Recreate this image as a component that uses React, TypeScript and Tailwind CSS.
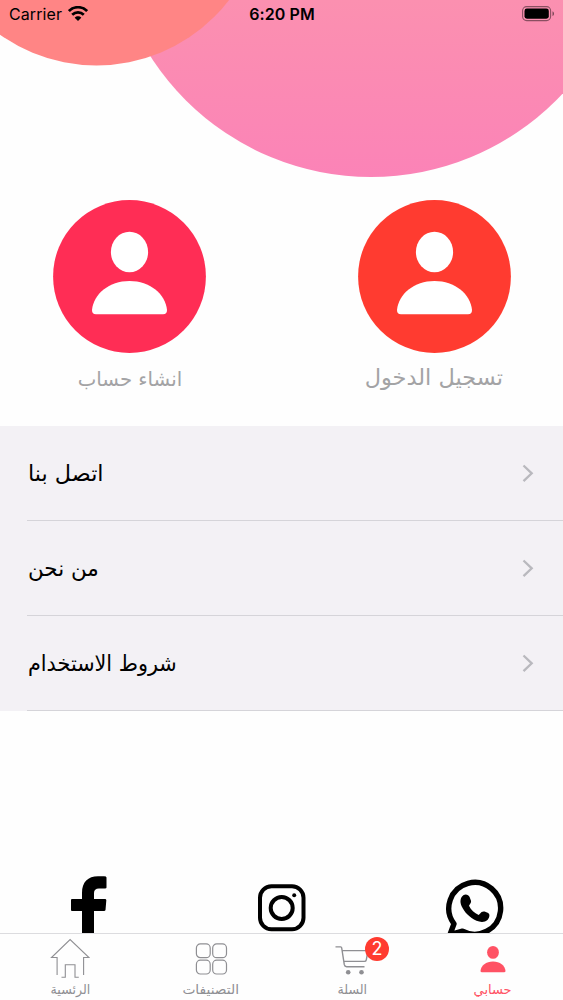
import React from "react";

const FONT = "font-['Inter',sans-serif]";
const ARABIC = "font-['DejaVu_Sans',sans-serif]";

function Backdrop() {
  return (
    <svg className="absolute left-0 top-0" width="563" height="180" viewBox="0 0 563 180">
      <defs>
        <linearGradient id="pink" x1="0" y1="0" x2="0" y2="177" gradientUnits="userSpaceOnUse">
          <stop offset="0" stopColor="#fb90b0" />
          <stop offset="1" stopColor="#fb83b7" />
        </linearGradient>
      </defs>
      <circle cx="371" cy="-85" r="262" fill="url(#pink)" />
      <circle cx="96.5" cy="-101.5" r="167" fill="#ff8585" />
    </svg>
  );
}

function StatusBar() {
  return (
    <div className="relative flex h-[29px] items-center justify-between pl-[9px] pr-[8px] text-[16px] text-black">
      <div className="flex w-[120px] items-center gap-[6px]">
        <span className="relative top-[-1px] tracking-[0.1px]">Carrier</span>
        <svg className="relative top-[-1px]" width="20" height="15" viewBox="0 0 20 15" fill="none" stroke="#000" strokeWidth="2.7">
          <path d="M.9 5.1C6-.1 14-.1 19.1 5.1" />
          <path d="M4.200 8.700C7.500 5.500 12.500 5.500 15.800 8.700" />
          <path d="M10 15L6.700 11.700C8.500 9.900 11.500 9.900 13.300 11.700Z" fill="#000" stroke="none" />
        </svg>
      </div>
      <span className="relative top-[-1px] font-semibold tracking-[0.1px]">6:20 PM</span>
      <div className="flex w-[120px] justify-end">
        <svg className="relative top-[-1px]" width="33" height="16" viewBox="0 0 33 16">
          <rect x=".6" y=".6" width="28" height="14" rx="4" fill="none" stroke="#000" strokeOpacity=".45" strokeWidth="1.1" />
          <rect x="2.5" y="2.5" width="24.3" height="10.2" rx="2.4" fill="#000" />
          <path d="M30.5 5.2v4.8c2-.8 2-4 0-4.8Z" fill="#000" fillOpacity=".5" />
        </svg>
      </div>
    </div>
  );
}

function Avatar({ color }: { color: string }) {
  return (
    <svg width="153" height="153" viewBox="0 0 153 153">
      <circle cx="76.5" cy="76.5" r="76.4" fill={color} />
      <ellipse cx="76.5" cy="52" rx="18.6" ry="20.3" fill="#fff" />
      <path d="M43 114.300Q39 114.300 39 110C40.500 94 56 81 76.500 81S112.500 94 114 110Q114 114.300 110 114.300Z" fill="#fff" />
    </svg>
  );
}

function MenuRow({ label, fit }: { label: string; fit: string }) {
  return (
    <div className="flex h-[95px] flex-col">
      <div className="flex flex-1 items-center justify-between pl-[28px] pr-[29px]">
        <span dir="rtl" className={`origin-left whitespace-nowrap pt-[2px] text-[22px] leading-[30px] text-black ${ARABIC} ${fit}`}>
          {label}
        </span>
        <svg width="12" height="18" viewBox="0 0 12 18" fill="none" stroke="#b9b9be" strokeWidth="2.3">
          <path d="M1.5 1.5L9.7 9.3L1.5 17.1" />
        </svg>
      </div>
      <div className="ml-[27px] h-px bg-[#d5d4d9]" />
    </div>
  );
}

function Facebook() {
  return (
    <svg width="38" height="66" viewBox="0 0 38 66">
      <path d="M12 66V35H2Q1 35 1 34V24Q1 23 2 23H12V17C12 6 18 .3 28 .3H34Q36.500 .3 36.500 1.500V11.500Q36.500 12.500 35 12.500H29Q24 12.500 24 17V23H35Q36.500 23 36.300 24.500L35.500 34Q35.300 35 34 35H24V66Z" />
    </svg>
  );
}

function Instagram() {
  return (
    <svg width="48" height="48" viewBox="0 0 48 48" fill="none" stroke="#000">
      <rect x="2" y="2.2" width="43.5" height="43" rx="11.5" strokeWidth="4" />
      <circle cx="23.7" cy="24" r="11" strokeWidth="4" />
      <circle cx="36.2" cy="11.3" r="2" fill="#000" stroke="none" />
    </svg>
  );
}

function WhatsApp() {
  return (
    <svg width="60" height="60" viewBox="0 0 60 60">
      <path d="M5 55.5L9 44.8A25.9 25.9 0 1 1 17.5 52.1Z" fill="none" stroke="#000" strokeWidth="5.4" strokeLinejoin="round" />
      <path d="M18.300 16.300C20.500 14.500 23.500 15.500 24.600 18L26 21.800C26.600 23.500 24.800 25.300 24 26.700C26 30.800 29.300 34 33.700 36L36.600 33.100C37.600 32.300 39 32.200 40.200 32.700L43.200 34C45.200 35.500 44.500 38.500 42.700 40.700C39.500 43.700 35.300 43.200 31.500 41.700C24.500 38.500 19.500 33.500 16.500 27C14.700 22.700 15.300 18.700 18.300 16.300Z" />
    </svg>
  );
}

function HomeIcon() {
  return (
    <svg width="40" height="40" viewBox="0 0 40 40" fill="none" stroke="#8f8f93" strokeWidth="1.1">
      <path d="M7.1 37V19.5H1.5L20.1 1.500L39 19.500H33.600V37M11.500 39.300H15.300V26.800H25V39.300H28.800" />
    </svg>
  );
}

function GridIcon() {
  return (
    <svg width="40" height="40" viewBox="0 0 40 40" fill="none" stroke="#8f8f93" strokeWidth="1.2">
      <rect x="5.4" y="5.9" width="13.8" height="13.8" rx="4" />
      <rect x="21.7" y="5.9" width="13.8" height="13.8" rx="4" />
      <rect x="5.4" y="22.2" width="13.8" height="13.8" rx="4" />
      <rect x="21.7" y="22.2" width="13.8" height="13.8" rx="4" />
    </svg>
  );
}

function CartIcon() {
  return (
    <div className="relative">
      <svg width="40" height="40" viewBox="0 0 40 40" fill="none" stroke="#8f8f93" strokeWidth="1.4" strokeLinejoin="round">
        <path d="M3.500 8.900H8.700Q9.500 8.900 9.700 10L12.300 26.700Q12.700 28.700 14.600 28.700H32.500M10.400 12.600H36L34.300 21.800Q34 23.400 32.300 23.400H12" />
        <circle cx="16.2" cy="34.3" r="2.3" fill="#8f8f93" stroke="none" />
        <circle cx="29.5" cy="34.3" r="2.3" fill="#8f8f93" stroke="none" />
      </svg>
      <span className="absolute left-[33px] top-[-1px] flex size-[24px] items-center justify-center rounded-full bg-[#ff3b30] text-[18px] leading-none text-white">2</span>
    </div>
  );
}

function UserIcon() {
  return (
    <svg width="40" height="40" viewBox="0 0 40 40" fill="#ff5264">
      <ellipse cx="20" cy="14.4" rx="5.9" ry="6.4" />
      <path d="M9 34.200Q7.500 34.200 7.500 32.900C8 27.800 13 23.600 20 23.600S32 27.800 32.500 32.900Q32.500 34.200 31 34.200Z" />
    </svg>
  );
}

function Tab({ icon, label, fit = "", active = false }: { icon: React.ReactNode; label: string; fit?: string; active?: boolean }) {
  return (
    <div className={`flex flex-1 flex-col items-center pt-[4px] text-[13px] leading-[20px] ${active ? "text-[#ff5264]" : "text-[#8f8f93]"}`}>
      {icon}
      <span dir="rtl" className={`mt-[2px] whitespace-nowrap ${ARABIC} ${fit}`}>{label}</span>
    </div>
  );
}

export default function App() {
  return (
    <div className={`relative flex h-[1000px] w-[563px] flex-col overflow-hidden bg-[#fefefe] ${FONT}`}>
      <Backdrop />
      <StatusBar />
      <div className="mt-[171px] flex h-[226px] justify-between pl-[53px] pr-[52.5px]">
        <div className="flex w-[153px] flex-col items-center">
          <Avatar color="#ff2d55" />
          <span dir="rtl" className={`mt-[10px] scale-x-[0.985] whitespace-nowrap text-[20px] leading-[32px] text-[#a3a3a5] ${ARABIC}`}>انشاء حساب</span>
        </div>
        <div className="flex w-[153px] flex-col items-center">
          <Avatar color="#ff3b30" />
          <span dir="rtl" className={`mt-[9px] scale-x-[1.02] whitespace-nowrap text-[22px] leading-[32px] text-[#a3a3a5] ${ARABIC}`}>تسجيل الدخول</span>
        </div>
      </div>
      <div className="flex h-[285px] flex-col bg-[#f3f1f5]">
        <MenuRow label="اتصل بنا" fit="scale-x-[1.015]" />
        <MenuRow label="من نحن" fit="scale-x-[0.975]" />
        <MenuRow label="شروط الاستخدام" fit="scale-x-[0.943]" />
      </div>
      <div className="flex h-[222px] items-start justify-between overflow-hidden pl-[70px] pr-[58px] pt-[165px]">
        <Facebook />
        <div className="ml-[10px] pt-[8px]"><Instagram /></div>
        <div className="pt-[3px]"><WhatsApp /></div>
      </div>
      <div className="flex h-[67px] border-t border-[#dcdcdf] bg-[#fefefe]">
        <Tab icon={<HomeIcon />} label="الرئسية" fit="scale-x-[0.97]" />
        <Tab icon={<GridIcon />} label="التصنيفات" fit="scale-x-[1.06]" />
        <Tab icon={<CartIcon />} label="السلة" fit="scale-x-[0.97]" />
        <Tab icon={<UserIcon />} label="حسابي" active />
      </div>
    </div>
  );
}
